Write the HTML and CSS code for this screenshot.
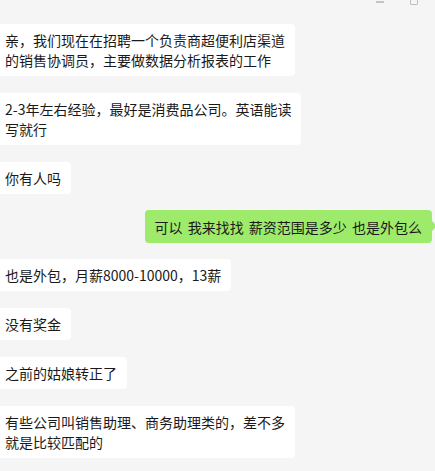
FILE: index.html
```html
<!DOCTYPE html>
<html lang="zh-CN">
<head>
  <meta charset="UTF-8" />
  <meta name="viewport" content="width=device-width, initial-scale=1.0"/>
  <title>聊天</title>
  <link rel="stylesheet" href="styles.css">
</head>
<body>

  <!-- window controls, cut off at the top -->
  <div class="titlebar">
    <span class="ctrl-min"></span>
    <span class="ctrl-max"></span>
  </div>

  <div class="chat">
    <div class="row">
      <div class="bubble">亲，我们现在在招聘一个负责商超便利店渠道<br>的销售协调员，主要做数据分析报表的工作</div>
    </div>
    <div class="row">
      <div class="bubble">2-3年左右经验，最好是消费品公司。英语能读<br>写就行</div>
    </div>
    <div class="row">
      <div class="bubble">你有人吗</div>
    </div>
    <div class="row row-me">
      <div class="bubble bubble-me">可以 我来找找 薪资范围是多少 也是外包么</div>
    </div>
    <div class="row">
      <div class="bubble">也是外包，月薪8000-10000，13薪</div>
    </div>
    <div class="row">
      <div class="bubble">没有奖金</div>
    </div>
    <div class="row">
      <div class="bubble">之前的姑娘转正了</div>
    </div>
    <div class="row">
      <div class="bubble">有些公司叫销售助理、商务助理类的，差不多<br>就是比较匹配的</div>
    </div>
  </div>

</body>
</html>
```

FILE: styles.css
```css
    * {
      box-sizing: border-box;
      margin: 0;
      padding: 0;
    }

    body {
      background: #f5f5f5;
      font-family: "Noto Sans CJK SC", "Noto Sans", sans-serif;
      font-size: 14px;
      color: #1a1a1a;
      overflow: hidden;
    }

    .titlebar {
      height: 24px;
      display: flex;
      justify-content: flex-end;
      align-items: flex-start;
      gap: 26px;
      padding-right: 17px;
    }

    .ctrl-min {
      width: 8px;
      height: 2px;
      margin-top: 1px;
      background: #c4c4c4;
    }

    .ctrl-max {
      width: 8px;
      height: 8px;
      margin-top: -3px;
      border: 1px solid #bdbdbd;
      border-radius: 1px;
    }

    .chat {
      display: flex;
      flex-direction: column;
      gap: 17px;
      margin-left: -5px;
    }

    .row {
      display: flex;
    }

    .row-me {
      justify-content: flex-end;
      padding-right: 3px;
      margin-top: -1px;
      margin-bottom: -1px;
    }

    .bubble {
      background: #fff;
      border-radius: 4px;
      padding: 6px 10px;
      line-height: 20px;
      white-space: nowrap;
    }

    .bubble-me {
      position: relative;
      background: #9eea6a;
      padding: 7px 10px 6px;
      word-spacing: 2px;
    }

    .bubble-me::after {
      content: "";
      position: absolute;
      right: -5px;
      top: 11px;
      border-left: 5px solid #9eea6a;
      border-top: 5px solid transparent;
      border-bottom: 5px solid transparent;
    }
```
